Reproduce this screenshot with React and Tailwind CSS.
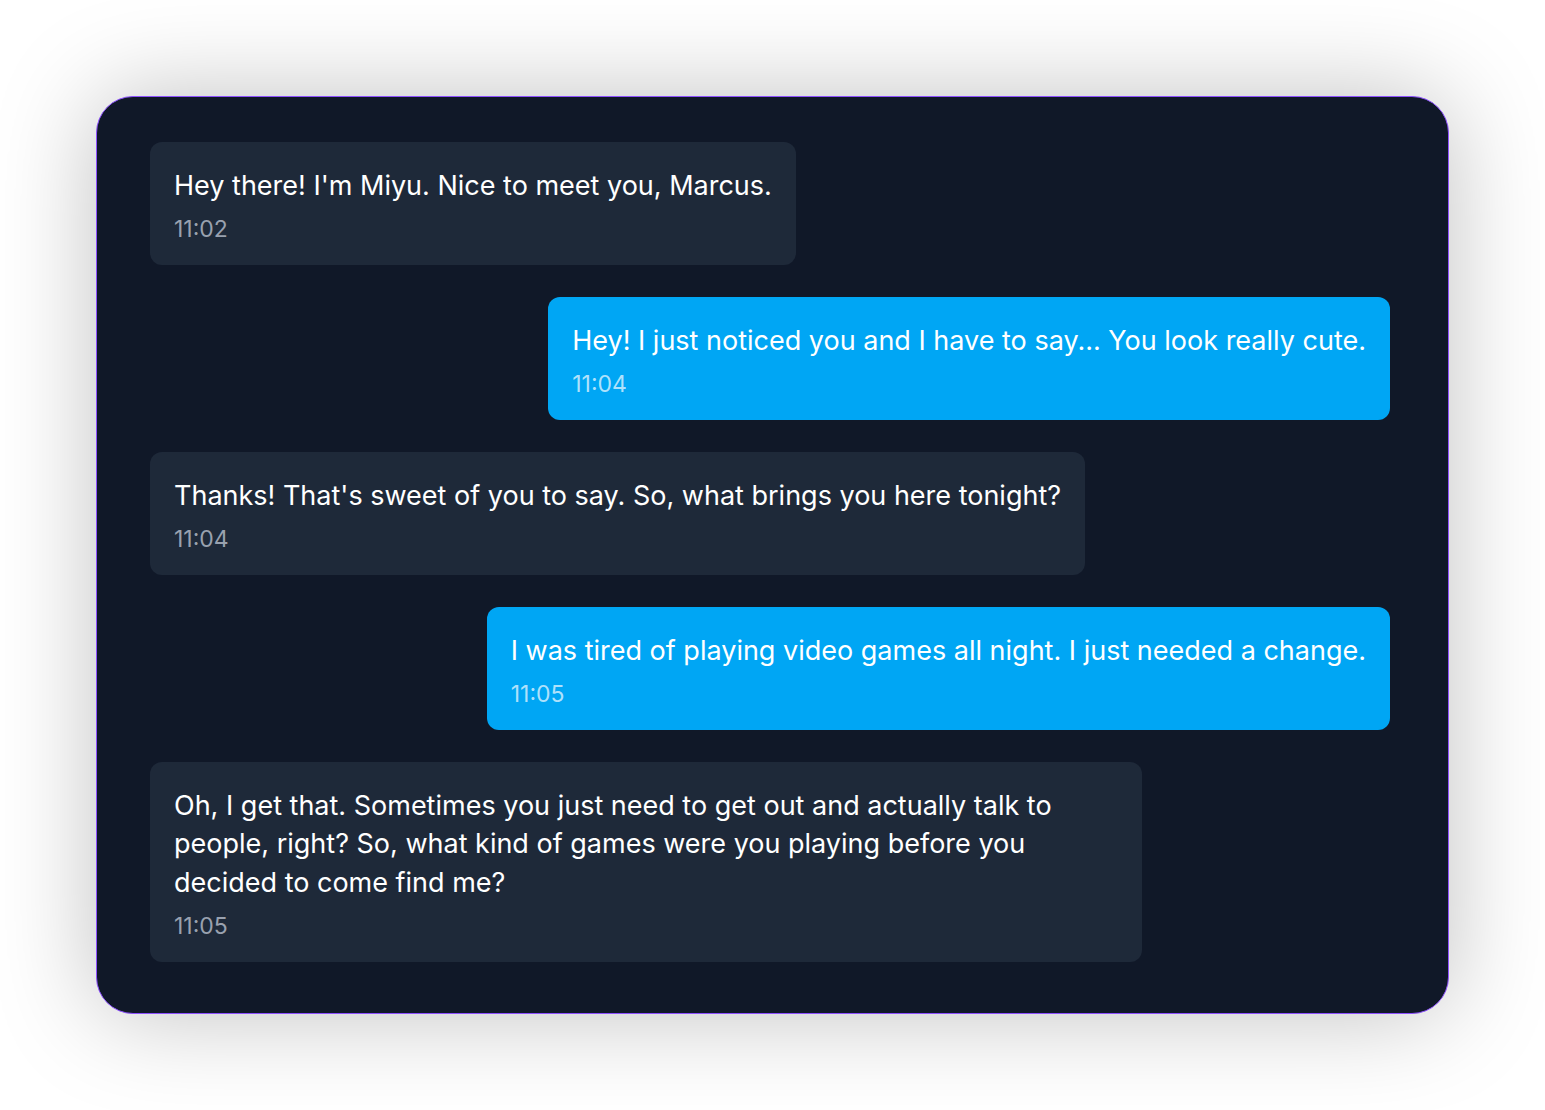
import React from "react";

const messages = [
  { from: "her", text: "Hey there! I'm Miyu. Nice to meet you, Marcus.", time: "11:02" },
  { from: "me", text: "Hey! I just noticed you and I have to say... You look really cute.", time: "11:04" },
  { from: "her", text: "Thanks! That's sweet of you to say. So, what brings you here tonight?", time: "11:04" },
  { from: "me", text: "I was tired of playing video games all night. I just needed a change.", time: "11:05" },
  {
    from: "her",
    text: "Oh, I get that. Sometimes you just need to get out and actually talk to people, right? So, what kind of games were you playing before you decided to come find me?",
    time: "11:05",
  },
];

export default function App() {
  return (
    <div className="min-h-screen bg-white p-24" style={{ fontFamily: "Inter, 'Noto Sans', sans-serif" }}>
      <div className="rounded-[37px] border border-violet-500 bg-gray-900 pl-[53px] pr-[58px] pt-[45px] pb-[51px] shadow-[0_0_100px_rgba(0,0,0,0.25)]">
        <div className="flex flex-col gap-8">
          {messages.map((m, i) =>
            m.from === "me" ? (
              <div key={i} className="flex justify-end">
                <div className="max-w-[80%] rounded-xl bg-sky-500 px-6 pt-[25px] pb-[22px] text-white">
                  <p className="text-[27px] leading-[38.4px]">{m.text}</p>
                  <p className="mt-[12px] text-[23px] leading-[25.6px] text-sky-100/80">{m.time}</p>
                </div>
              </div>
            ) : (
              <div key={i} className="flex justify-start">
                <div className="max-w-[80%] rounded-xl bg-gray-800 px-6 pt-[25px] pb-[22px] text-white">
                  <p className="text-[27px] leading-[38.4px]">{m.text}</p>
                  <p className="mt-[12px] text-[23px] leading-[25.6px] text-gray-400">{m.time}</p>
                </div>
              </div>
            )
          )}
        </div>
      </div>
    </div>
  );
}
